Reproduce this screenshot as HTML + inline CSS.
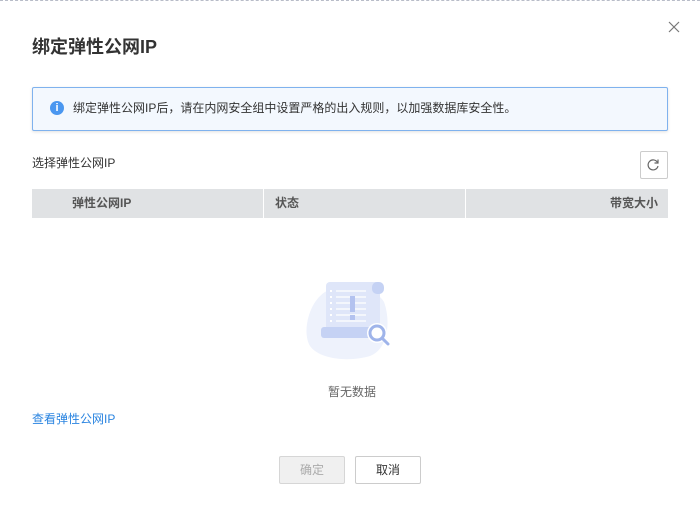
<!DOCTYPE html>
<html><head><meta charset="utf-8"><style>
body{margin:0;width:700px;height:515px;background:#fff;font-family:"Liberation Sans","Noto Sans CJK SC",sans-serif;position:relative;overflow:hidden;color:#252b3a}
.topline{position:absolute;top:0;left:0;width:700px;border-top:1px dashed #b8bcc8}
.abs{position:absolute}
</style></head><body>
<div class="topline"></div>
<svg class="abs" style="left:668px;top:21px" width="12" height="12" viewBox="0 0 12 12"><path d="M1 1L11 11M11 1L1 11" stroke="#777" stroke-width="1.2"/></svg>
<div class="abs" style="left:32px;top:34px;font-size:18px;font-weight:bold;line-height:26px;color:#333">绑定弹性公网IP</div>
<div class="abs" style="left:32px;top:87px;width:634px;height:42px;border:1px solid #7fb2ee;background:#f3f8fe;border-radius:2px;box-shadow:0 1px 3px rgba(0,0,0,.12)"></div>
<div class="abs" style="left:50px;top:101px;width:14px;height:14px;border-radius:50%;background:#4a97f0;color:#fff;font-size:11px;font-weight:bold;text-align:center;line-height:14px">i</div>
<div class="abs" style="left:73px;top:100px;font-size:12px;line-height:17px;color:#333">绑定弹性公网IP后，请在内网安全组中设置严格的出入规则，以加强数据库安全性。</div>
<div class="abs" style="left:32px;top:155px;font-size:12px;line-height:17px;color:#333">选择弹性公网IP</div>
<div class="abs" style="left:640px;top:151px;width:26px;height:26px;border:1px solid #ccc;border-radius:2px"></div>
<svg class="abs" style="left:646px;top:158px" width="14" height="14" viewBox="0 0 14 14"><path d="M11.5 4.5A5 5 0 1 0 12 8" fill="none" stroke="#666" stroke-width="1.2"/><path d="M12 1.5V5H8.5" fill="none" stroke="#666" stroke-width="1.2"/></svg>
<div class="abs" style="left:32px;top:189px;width:636px;height:29px;background:#e0e2e4"></div>
<div class="abs" style="left:263px;top:189px;width:1px;height:29px;background:#fff"></div>
<div class="abs" style="left:465px;top:189px;width:1px;height:29px;background:#fff"></div>
<div class="abs" style="left:72px;top:195px;font-size:12px;font-weight:bold;color:#555;line-height:17px">弹性公网IP</div>
<div class="abs" style="left:275px;top:195px;font-size:12px;font-weight:bold;color:#555;line-height:17px">状态</div>
<div class="abs" style="left:610px;top:195px;font-size:12px;font-weight:bold;color:#555;line-height:17px">带宽大小</div>
<svg class="abs" style="left:300px;top:278px" width="100" height="84" viewBox="0 0 100 84">
<path d="M25 14 C40 5 75 8 84 24 C90 40 90 70 70 78 C50 84 20 82 10 68 C2 55 8 25 25 14Z" fill="#eef2fc"/>
<rect x="26" y="4" width="54" height="52" rx="4" fill="#dfe6f9"/>
<rect x="72" y="4" width="12" height="12" rx="5" fill="#c5d2f4"/>
<path d="M30 13h2M30 19h2M30 25h2M30 31h2M30 37h2M30 43h2" stroke="#fff" stroke-width="2"/>
<path d="M36 13h30M36 19h30M36 25h30M36 31h30M36 37h30M36 43h30" stroke="#fff" stroke-width="1.2"/>
<rect x="50" y="18" width="5" height="16" fill="#b3c2ef"/><rect x="50" y="37" width="5" height="5" fill="#b3c2ef"/>
<rect x="21" y="49" width="54" height="11" rx="3" fill="#c5d2f4"/>
<circle cx="77" cy="55" r="10" fill="#fff"/><circle cx="77" cy="55" r="7" fill="none" stroke="#9fb4ea" stroke-width="3"/>
<path d="M82 60l6 6" stroke="#9fb4ea" stroke-width="3" stroke-linecap="round"/>
</svg>
<div class="abs" style="left:328px;top:384px;font-size:12px;color:#666;line-height:17px">暂无数据</div>
<div class="abs" style="left:32px;top:411px;font-size:12px;color:#2a84e0;line-height:17px">查看弹性公网IP</div>
<div class="abs" style="left:279px;top:456px;width:64px;height:26px;border:1px solid #d6d6d6;background:#f0f0f0;border-radius:2px;text-align:center;line-height:26px;font-size:12px;color:#aaa">确定</div>
<div class="abs" style="left:355px;top:456px;width:64px;height:26px;border:1px solid #ccc;background:#fff;border-radius:2px;text-align:center;line-height:26px;font-size:12px;color:#333">取消</div>
</body></html>
